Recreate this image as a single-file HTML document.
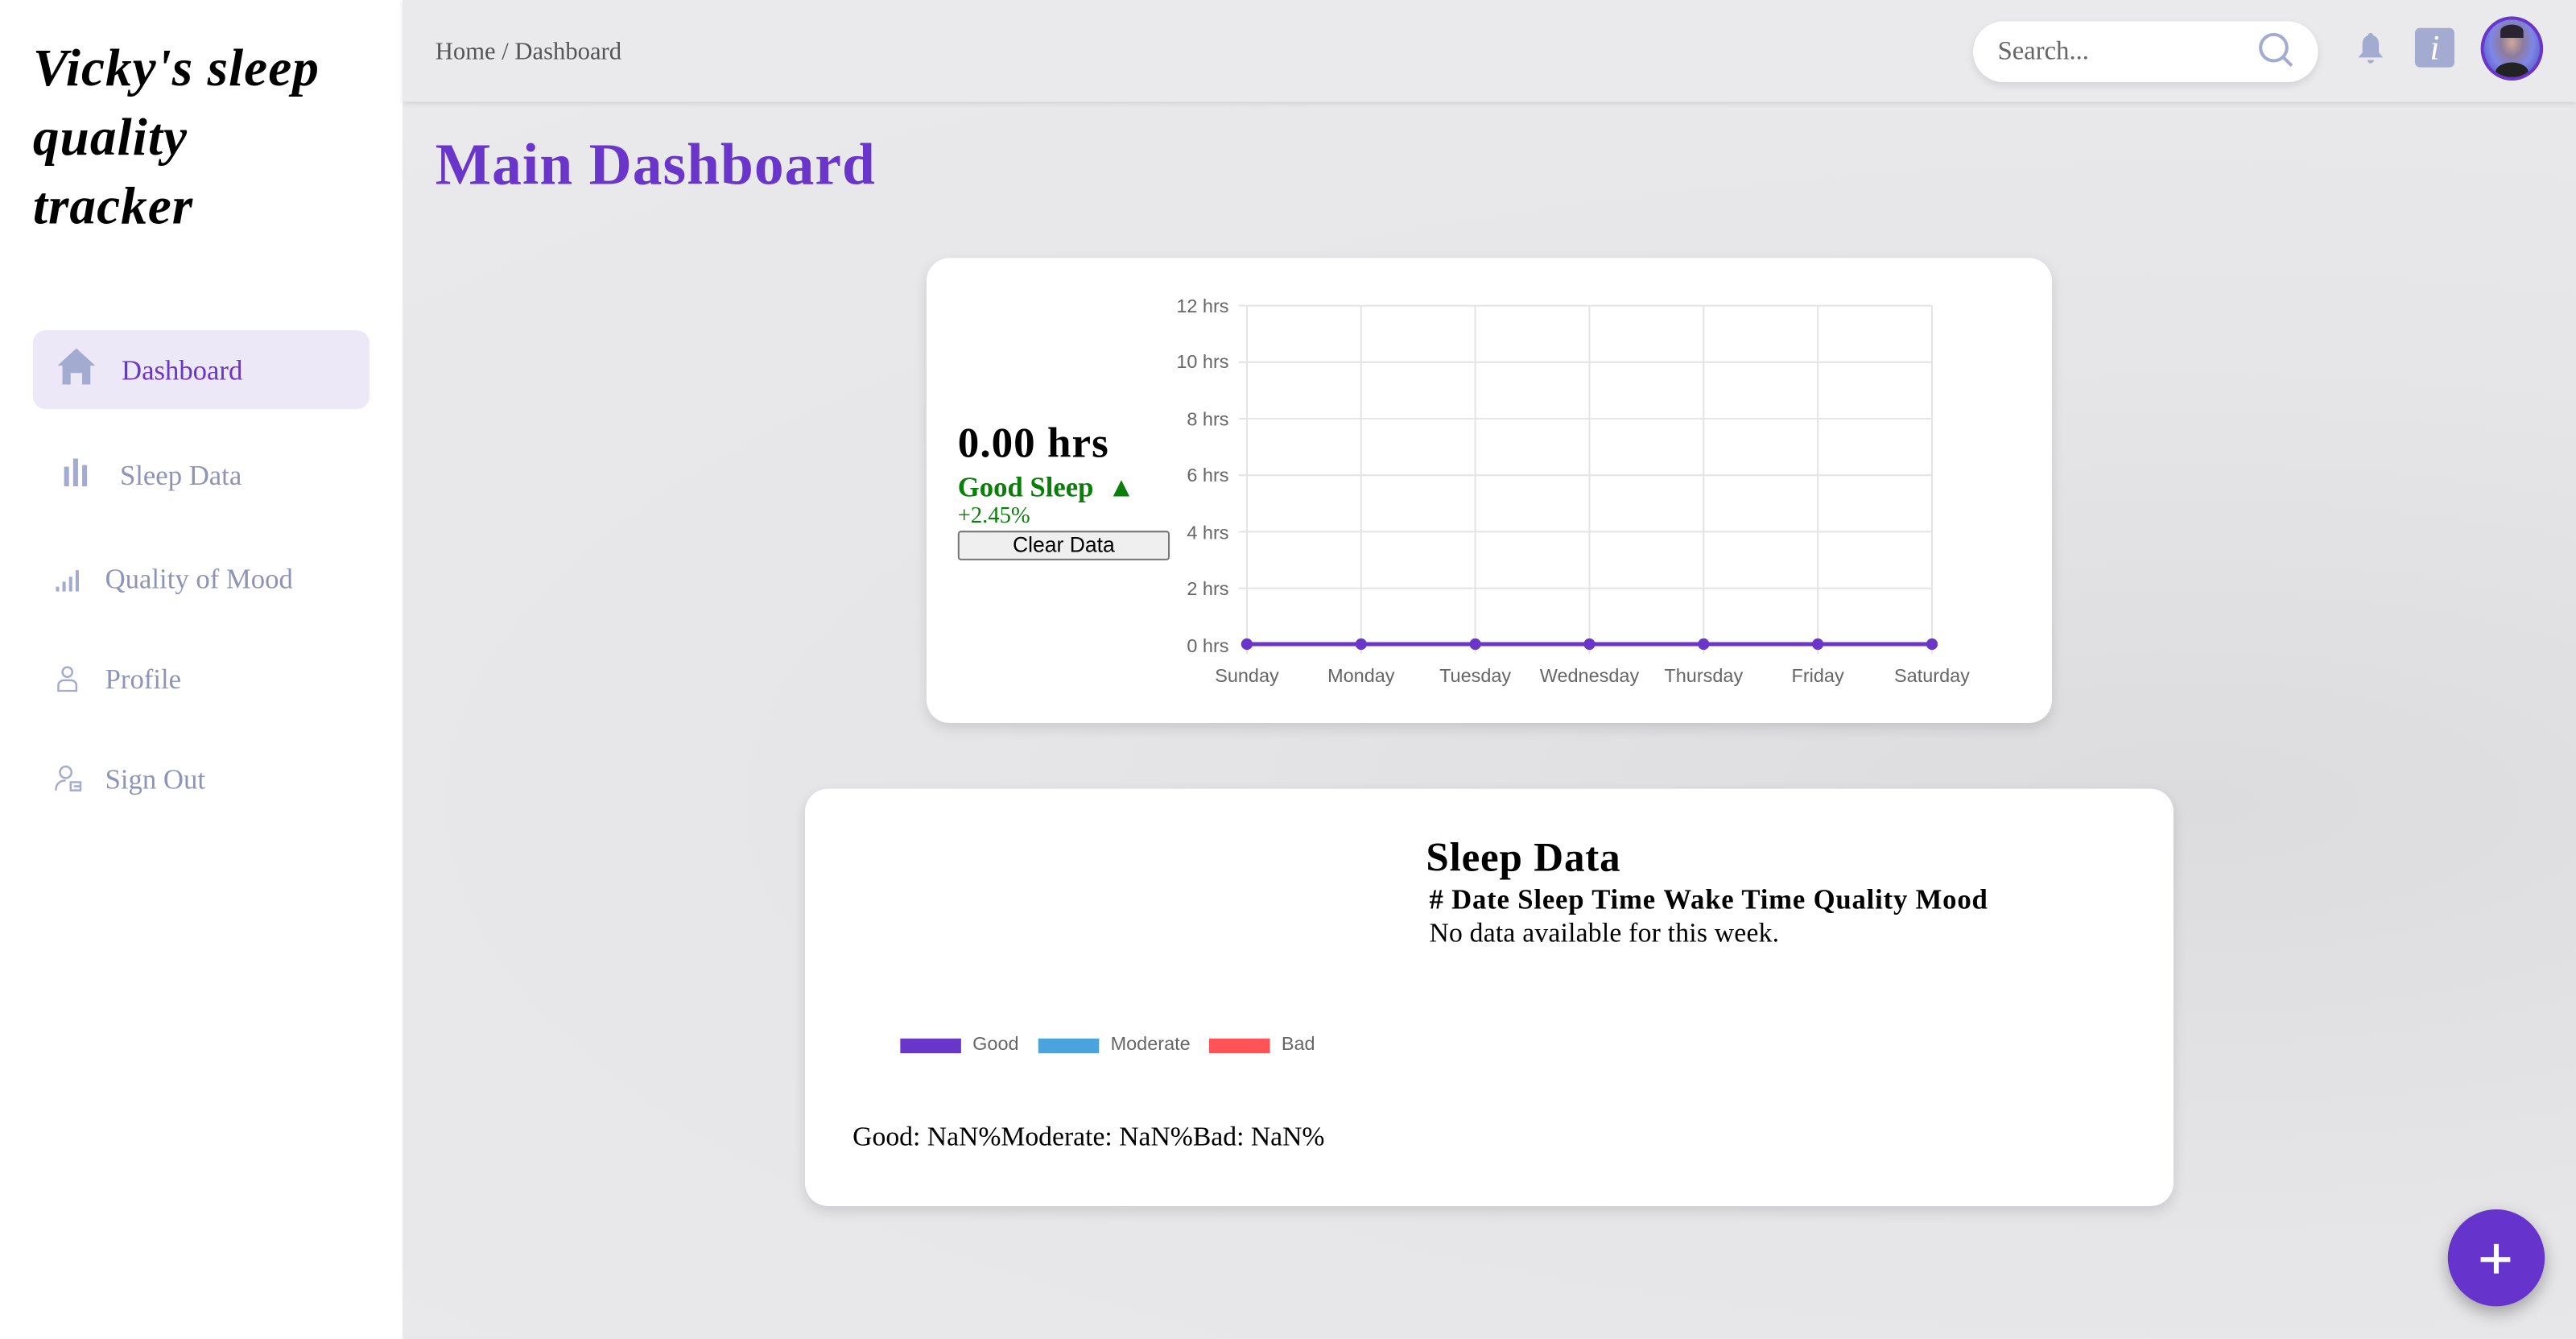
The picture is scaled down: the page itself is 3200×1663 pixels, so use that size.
<!DOCTYPE html>
<html><head><meta charset="utf-8"><style>
html,body{margin:0;padding:0;width:3200px;height:1662px;overflow:hidden;background:#e8e8ea}
#w{position:absolute;left:0;top:0;width:1568px;height:814.4px;transform:scale(2.0408);transform-origin:0 0;font-family:"Liberation Serif","DejaVu Serif",serif;
background:radial-gradient(ellipse at 85% 60%,#dcdcde 0%,#e6e6e8 40%,#ebebed 100%)}
.a{position:absolute;white-space:nowrap}
#side{position:absolute;left:0;top:0;width:245px;height:815px;background:#fff}
.nav{position:absolute;font-size:17px;color:#8e94b8}
#hdr{position:absolute;left:245px;top:0;right:0;height:62px;background:#eaeaec;box-shadow:0 1px 3px rgba(0,0,0,.12)}
.card{position:absolute;background:#fff;border-radius:14px;box-shadow:0 3px 8px rgba(0,0,0,.12)}
.ax{font-family:"Liberation Sans",Arial,sans-serif;font-size:11.5px;fill:#666}
</style></head><body><div id="w">
<div id="side">
 <div class="a" style="left:20px;top:20px;font-size:32px;font-weight:bold;font-style:italic;line-height:42px;white-space:normal;width:190px;letter-spacing:.5px">Vicky's sleep quality tracker</div>
 <div style="position:absolute;left:20px;top:201px;width:205px;height:48px;background:#ece8f7;border-radius:8px"></div>
 <svg class="a" style="left:35px;top:212px" width="23" height="22" viewBox="0 0 23 22"><path d="M11.5 0L23 10.5H20V22H15V15H8V22H3V10.5H0Z" fill="#a3acd0"/></svg>
 <div class="nav" style="left:74px;top:216px;color:#6a35c9">Dashboard</div>
 <svg class="a" style="left:38px;top:279px" width="16" height="17"><rect x="1" y="5" width="3" height="12" fill="#a3acd0"/><rect x="6.5" y="0" width="3" height="17" fill="#a3acd0"/><rect x="12" y="4" width="3" height="13" fill="#a3acd0"/></svg>
 <div class="nav" style="left:73px;top:280px">Sleep Data</div>
 <svg class="a" style="left:34px;top:345px" width="16" height="15"><rect x="0" y="12" width="2" height="3" fill="#a3acd0"/><rect x="4" y="9" width="2" height="6" fill="#a3acd0"/><rect x="8" y="6" width="2" height="9" fill="#a3acd0"/><rect x="12" y="2" width="2" height="13" fill="#a3acd0"/></svg>
 <div class="nav" style="left:64px;top:343px">Quality of Mood</div>
 <svg class="a" style="left:34px;top:405px" width="14" height="16" fill="none" stroke="#a3acd0" stroke-width="1.2"><circle cx="7" cy="4" r="3"/><path d="M1.5 15.5V12a3.5 3 0 0 1 3.5-3h4a3.5 3 0 0 1 3.5 3v3.5Z"/></svg>
 <div class="nav" style="left:64px;top:404px">Profile</div>
 <svg class="a" style="left:33px;top:465px" width="17" height="17" fill="none" stroke="#a3acd0" stroke-width="1.2"><circle cx="7" cy="5" r="3.5"/><path d="M1 16c0-4 2.5-6 6-6M10 11h6v5h-6zM12 13.5h4"/></svg>
 <div class="nav" style="left:64px;top:465px">Sign Out</div>
</div>
<div id="hdr"></div>
<div class="a" style="left:265px;top:24px;font-size:15px;color:#555">Home / Dashboard</div>
<div class="a" style="left:1201px;top:13px;width:210px;height:37px;background:#fff;border-radius:19px;box-shadow:0 2px 5px rgba(0,0,0,.1)"></div>
<div class="a" style="left:1216px;top:23px;font-size:16px;color:#666">Search...</div>
<svg class="a" style="left:1374px;top:19px" width="24" height="24" fill="none" stroke="#a3acd0" stroke-width="2"><circle cx="10" cy="10" r="8"/><path d="M16 16l5 5"/></svg>
<svg class="a" style="left:1434px;top:19px" width="18" height="20"><path d="M9 1c1 0 1.5.8 1.5 1.5C13 3.3 14 5.5 14 8v5l2.5 3H1.5L4 13V8c0-2.5 1-4.7 3.5-5.5C7.5 1.8 8 1 9 1Z M7 17.5h4a2 2 0 0 1-4 0Z" fill="#a3acd0"/></svg>
<div class="a" style="left:1470px;top:17px;width:24px;height:24px;background:#a3acd0;border-radius:3px;color:#fff;font-style:italic;font-size:21px;text-align:center;line-height:25px">i</div>
<div class="a" style="left:1510px;top:10px;width:34px;height:35px;border:2.5px solid #6a35c9;border-radius:50%;background:radial-gradient(ellipse at 50% 40%,#d0a89a 0,#8b7c9e 28%,#7f86e8 55%,#5c62c8 80%);overflow:hidden"><div style="position:absolute;left:7px;top:26px;width:20px;height:12px;background:#222;border-radius:50% 50% 0 0"></div><div style="position:absolute;left:10px;top:3px;width:14px;height:8px;background:#2a2330;border-radius:50% 50% 0 0"></div></div>
<div class="a" style="left:265px;top:79px;font-size:36px;font-weight:bold;color:#6a35c9;letter-spacing:.5px">Main Dashboard</div>

<div class="card" style="left:564px;top:157px;width:685px;height:283px"></div>
<div class="a" style="left:583px;top:255px;font-size:26px;font-weight:bold;letter-spacing:.5px">0.00 hrs</div>
<div class="a" style="left:583px;top:287px;font-size:17px;font-weight:bold;color:#0a7d0a">Good Sleep &nbsp;▲</div>
<div class="a" style="left:583px;top:307px;font-size:14px;color:#0a7d0a">+2.45%</div>
<div class="a" style="left:583px;top:323px;width:127px;height:16px;border:1px solid #767676;border-radius:2px;background:#efefef;font-family:'Liberation Sans',Arial,sans-serif;font-size:13px;text-align:center;line-height:16px">Clear Data</div>
<svg class="a" style="left:0;top:0" width="1568" height="814">
 <g stroke="#e4e4e4" stroke-width="1">
  <line x1="754" y1="186" x2="1176" y2="186"/><line x1="754" y1="220.4" x2="1176" y2="220.4"/><line x1="754" y1="254.8" x2="1176" y2="254.8"/><line x1="754" y1="289.2" x2="1176" y2="289.2"/><line x1="754" y1="323.6" x2="1176" y2="323.6"/><line x1="754" y1="358" x2="1176" y2="358"/>
  <line x1="759" y1="186" x2="759" y2="398"/><line x1="828.5" y1="186" x2="828.5" y2="398"/><line x1="898" y1="186" x2="898" y2="398"/><line x1="967.5" y1="186" x2="967.5" y2="398"/><line x1="1037" y1="186" x2="1037" y2="398"/><line x1="1106.5" y1="186" x2="1106.5" y2="398"/><line x1="1176" y1="186" x2="1176" y2="398"/>
 </g>
 <g class="ax" text-anchor="end"><text x="748" y="190">12 hrs</text><text x="748" y="224">10 hrs</text><text x="748" y="259">8 hrs</text><text x="748" y="293">6 hrs</text><text x="748" y="328">4 hrs</text><text x="748" y="362">2 hrs</text><text x="748" y="397">0 hrs</text></g>
 <g class="ax" text-anchor="middle"><text x="759" y="415">Sunday</text><text x="828.5" y="415">Monday</text><text x="898" y="415">Tuesday</text><text x="967.5" y="415">Wednesday</text><text x="1037" y="415">Thursday</text><text x="1106.5" y="415">Friday</text><text x="1176" y="415">Saturday</text></g>
 <line x1="759" y1="392" x2="1176" y2="392" stroke="#6a35c9" stroke-width="2.5"/>
 <g fill="#6a35c9"><circle cx="759" cy="392" r="3.5"/><circle cx="828.5" cy="392" r="3.5"/><circle cx="898" cy="392" r="3.5"/><circle cx="967.5" cy="392" r="3.5"/><circle cx="1037" cy="392" r="3.5"/><circle cx="1106.5" cy="392" r="3.5"/><circle cx="1176" cy="392" r="3.5"/></g>
</svg>

<div class="card" style="left:490px;top:480px;width:833px;height:254px"></div>
<div class="a" style="left:868px;top:509px;font-size:25px;font-weight:bold;letter-spacing:.4px">Sleep Data</div>
<div class="a" style="left:870px;top:538px;font-size:17px;font-weight:bold;letter-spacing:.4px">#&nbsp;Date&nbsp;Sleep Time&nbsp;Wake Time&nbsp;Quality&nbsp;Mood</div>
<div class="a" style="left:870px;top:558px;font-size:16.5px;letter-spacing:.1px">No data available for this week.</div>
<div class="a" style="left:548px;top:632px;width:37px;height:9px;background:#6a35c9"></div>
<div class="a" style="left:632px;top:632px;width:37px;height:9px;background:#4aa3dc"></div>
<div class="a" style="left:736px;top:632px;width:37px;height:9px;background:#ff5358"></div>
<div class="a" style="left:592px;top:630px;font-family:'Liberation Sans',Arial,sans-serif;font-size:11.5px;color:#666">Good</div>
<div class="a" style="left:676px;top:630px;font-family:'Liberation Sans',Arial,sans-serif;font-size:11.5px;color:#666">Moderate</div>
<div class="a" style="left:780px;top:630px;font-family:'Liberation Sans',Arial,sans-serif;font-size:11.5px;color:#666">Bad</div>
<div class="a" style="left:519px;top:682px;font-size:16.5px">Good: NaN%Moderate: NaN%Bad: NaN%</div>

<div class="a" style="left:1490px;top:736px;width:59px;height:59px;border-radius:50%;background:#6633cc;box-shadow:0 4px 10px rgba(0,0,0,.3)"></div>
<div class="a" style="left:1510px;top:765px;width:18px;height:2.5px;background:#fff"></div>
<div class="a" style="left:1518px;top:757px;width:2.5px;height:18px;background:#fff"></div>
</div></body></html>
